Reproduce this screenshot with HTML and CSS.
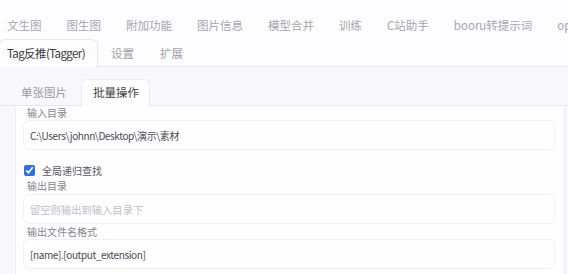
FILE: index.html
```html
<!DOCTYPE html>
<html lang="zh-CN">
<head>
    <meta charset="UTF-8">
    <meta name="viewport" content="width=device-width, initial-scale=1.0">
    <title>Tag反推(Tagger)</title>
    <link rel="stylesheet" href="styles.css">
</head>
<body>
    <!-- Top level tabs -->
    <nav class="main-tabs">
        <span>文生图</span>
        <span>图生图</span>
        <span>附加功能</span>
        <span>图片信息</span>
        <span>模型合并</span>
        <span>训练</span>
        <span>C站助手</span>
        <span>booru转提示词</span>
        <span>openpose</span>
    </nav>

    <nav class="sub-tabs">
        <span class="tab active">Tag反推(Tagger)</span>
        <span class="tab">设置</span>
        <span class="tab">扩展</span>
    </nav>

    <section class="tagger">
        <nav class="mode-tabs">
            <span class="tab">单张图片</span>
            <span class="tab active">批量操作</span>
        </nav>

        <div class="panel">
            <label class="field">
                <span class="field-label">输入目录</span>
                <input type="text" class="text-input" value="C:\Users\johnn\Desktop\演示\素材">
            </label>

            <label class="check-row">
                <input type="checkbox" checked>
                <span>全局递归查找</span>
            </label>

            <label class="field">
                <span class="field-label">输出目录</span>
                <input type="text" class="text-input" placeholder="留空则输出到输入目录下">
            </label>

            <label class="field">
                <span class="field-label">输出文件名格式</span>
                <input type="text" class="text-input" value="[name].[output_extension]">
            </label>
        </div>
    </section>
</body>
</html>
```

FILE: styles.css
```css
/* General */
body {
    margin: 0;
    background: #fdfcfe;
    font-family: "Noto Sans CJK SC", "Noto Sans", sans-serif;
    color: #333;
    overflow: hidden;
}

/* Top tabs */
.main-tabs {
    display: flex;
    align-items: flex-end;
    gap: 25px;
    height: 39px;
    padding: 0 0 6px 7px;
    box-sizing: border-box;
    white-space: nowrap;
    overflow: hidden;
    font-size: 11.5px;
    line-height: 16px;
    color: #a6a6ae;
}

/* Second row tabs */
.sub-tabs {
    display: flex;
    height: 28px;
    box-sizing: border-box;
    border-bottom: 1px solid #ebe8f0;
    font-size: 11.5px;
}

.sub-tabs .tab {
    line-height: 26px;
    padding: 0 12px;
    margin-right: 0;
    color: #a0a0a8;
    border: 1px solid transparent;
    border-bottom: none;
    border-radius: 6px 6px 0 0;
}

.sub-tabs .tab.active {
    padding: 0 12px 0 7px;
    letter-spacing: -0.6px;
    color: #3a3a3a;
    background: #fdfcfe;
    border-color: #e8e6ee;
    margin-left: -1px;
    height: 27px;
}

/* Tagger area */
.tagger {
    background: #f8f8fc;
    height: 207px;
}

.mode-tabs {
    display: flex;
    height: 39px;
    padding: 12px 0 0 8px;
    box-sizing: border-box;
    border-bottom: 1px solid #e6e6ee;
    font-size: 11.5px;
}

.mode-tabs .tab {
    line-height: 25px;
    padding: 0 11px 0 12px;
    color: #9a9aa2;
    border: 1px solid transparent;
    border-bottom: none;
    border-radius: 6px 6px 0 0;
}

.mode-tabs .tab.active {
    margin-left: 2px;
    padding: 0 10px 0 11px;
    color: #444;
    background: #fefdff;
    border-color: #ebe9f0;
    height: 27px;
}

/* Panel */
.panel {
    margin: 0 3px 0 15px;
    padding: 0 9px 0 7px;
    background: #fefdff;
    border-left: 1px solid #eeedf3;
    border-right: 1px solid #eeedf3;
    height: 168px;
}

.field {
    display: block;
}

.field-label {
    display: block;
    padding-left: 4px;
    font-size: 10px;
    line-height: 13px;
    color: #85858d;
    margin-bottom: 1px;
}

.text-input {
    display: block;
    width: 100%;
    height: 30px;
    box-sizing: border-box;
    padding: 0 6px;
    border: 1px solid #f3edf6;
    border-radius: 6px;
    background: #fefdff;
    font-family: inherit;
    font-size: 10px;
    letter-spacing: -0.4px;
    color: #4a4a52;
    outline: none;
}

.text-input::placeholder {
    letter-spacing: 0;
    font-size: 10.3px;
    color: #c0bfc7;
}

.field + .check-row {
    margin-top: 10px;
}

.check-row {
    display: flex;
    align-items: center;
    gap: 7px;
    height: 20px;
    font-size: 10px;
    color: #55555c;
}

.check-row input {
    margin: 0 0 0 1px;
    width: 11px;
    height: 11px;
    accent-color: #2f6fe0;
}

.check-row + .field .field-label {
    line-height: 12px;
    margin-bottom: 2px;
}

.field + .field .field-label {
    line-height: 15px;
    margin-bottom: 0;
}
```
